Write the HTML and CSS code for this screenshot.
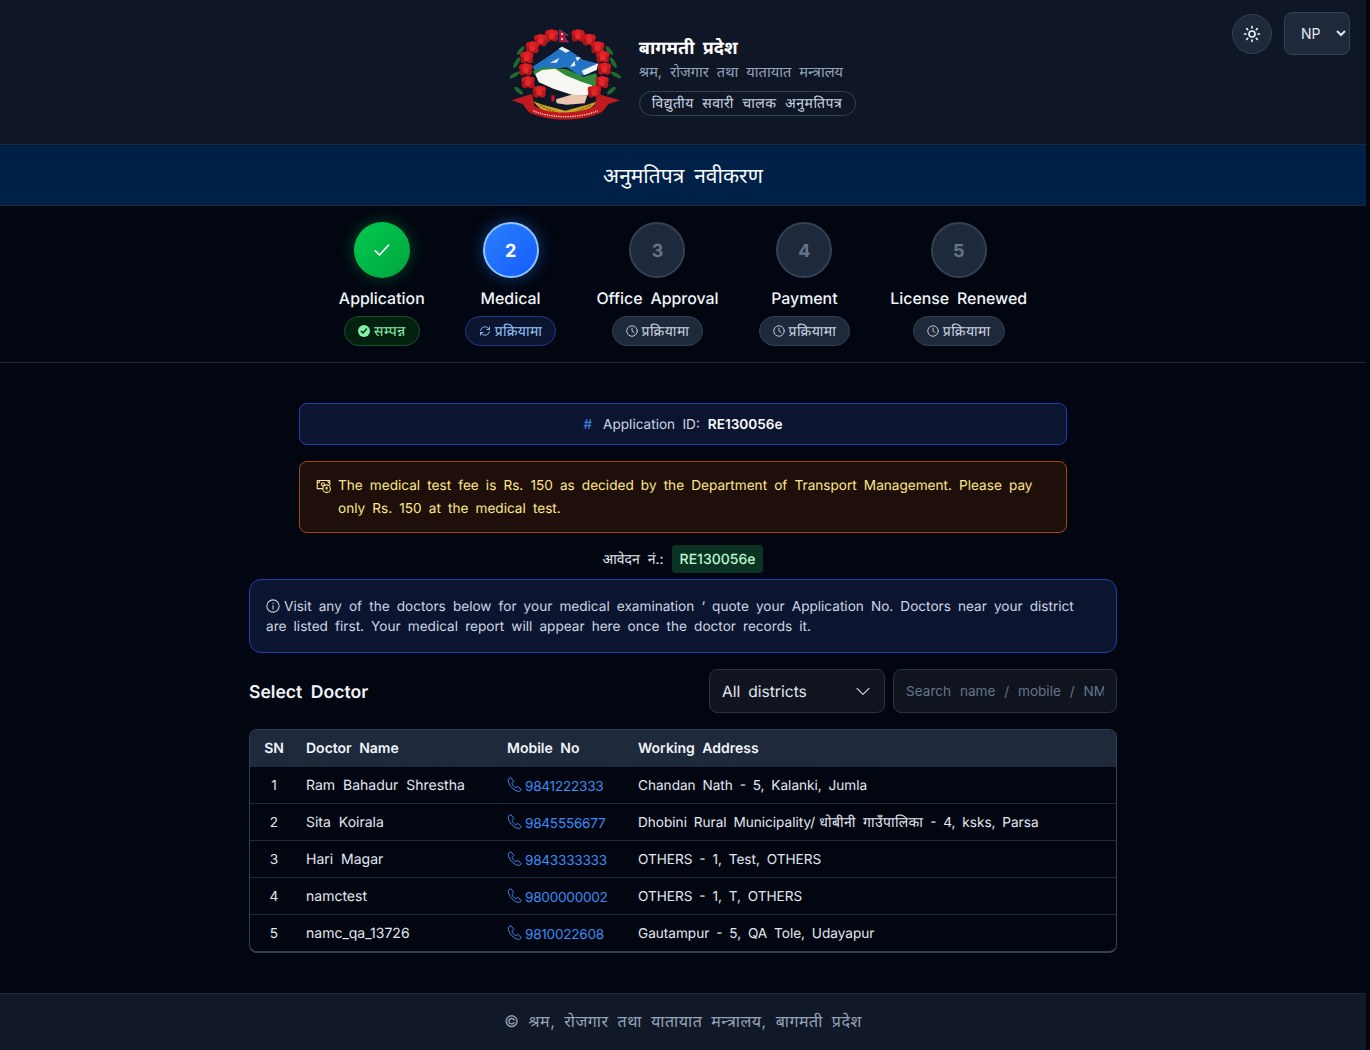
FILE: index.html
```html
<!DOCTYPE html>
<html>

<head>
  <meta charset="utf-8">
  <meta name="viewport" content="width=device-width, initial-scale=1">
  <title>अनुमतिपत्र नवीकरण</title>
  <link rel="stylesheet" href="styles.css">
</head>

<body>
  <header class="topbar">
    <div class="brand">
      <svg class="logo" viewBox="30 24 336 288" aria-label="Emblem">
        <defs>
          <g id="flower">
            <circle cx="-10" cy="-6" r="10" fill="#c4171c" />
            <circle cx="10" cy="-6" r="10" fill="#d01b20" />
            <circle cx="-9" cy="8" r="10" fill="#a91418" />
            <circle cx="9" cy="8" r="10" fill="#b9161b" />
            <circle cx="0" cy="-8" r="10" fill="#dc2226" />
            <circle cx="0" cy="3" r="9" fill="#e22a2c" />
          </g>
        </defs>
        <!-- leaves -->
        <g fill="#1f6b2c">
          <ellipse cx="140" cy="62" rx="16" ry="6" transform="rotate(-30 140 62)" />
          <ellipse cx="252" cy="62" rx="16" ry="6" transform="rotate(30 252 62)" />
          <ellipse cx="62" cy="92" rx="16" ry="6" transform="rotate(-50 62 92)" />
          <ellipse cx="328" cy="92" rx="16" ry="6" transform="rotate(50 328 92)" />
          <ellipse cx="50" cy="128" rx="18" ry="6" transform="rotate(-60 50 128)" />
          <ellipse cx="340" cy="128" rx="18" ry="6" transform="rotate(60 340 128)" />
          <ellipse cx="44" cy="165" rx="18" ry="6" transform="rotate(-30 44 165)" />
          <ellipse cx="348" cy="165" rx="18" ry="6" transform="rotate(30 348 165)" />
          <ellipse cx="56" cy="212" rx="16" ry="6" transform="rotate(40 56 212)" />
          <ellipse cx="334" cy="212" rx="16" ry="6" transform="rotate(-40 334 212)" />
          <ellipse cx="90" cy="240" rx="16" ry="6" transform="rotate(60 90 240)" />
          <ellipse cx="302" cy="240" rx="16" ry="6" transform="rotate(-60 302 240)" />
        </g>
        <!-- flag -->
        <path d="M178 28 L206 46 L192 48 L206 66 L178 66 Z" fill="#c8102e" stroke="#2b4a9b" stroke-width="2" />
        <circle cx="186" cy="42" r="3" fill="#fff" />
        <circle cx="186" cy="57" r="3" fill="#fff" />
        <!-- mountain -->
        <path d="M98 140 L150 106 L186 80 L216 96 L250 120 L292 130 L268 162 L240 168 L200 142 L130 150 L104 152 Z" fill="#2273c4" />
        <path d="M176 86 L186 80 L210 92 L198 98 Z M150 128 L178 114 L170 128 Z M226 112 L242 112 L232 124 Z M210 140 L224 122 L226 138 Z" fill="#e8f2fb" />
        <path d="M245 152 L295 130 L290 150 L252 166 Z" fill="#f2f6fa" />
        <!-- hills -->
        <path d="M98 154 L132 140 L200 148 L250 170 L288 160 L298 198 L270 210 L120 190 Z" fill="#2f8a3b" />
        <path d="M106 162 L126 150 L166 146 L196 166 L246 186 L276 196 L270 226 L220 226 L160 206 L116 186 Z" fill="#f7f7f2" />
        <!-- hands -->
        <path d="M168 238 L214 224 L262 226 L254 250 L200 254 L170 250 Z" fill="#e8c6b0" />
        <rect x="154" y="226" width="10" height="18" fill="#c8102e" />
        <!-- wheat -->
        <path d="M100 244 C130 284 170 290 192 286 C226 290 262 282 292 244 L262 254 L196 272 L128 254 Z" fill="#c9a227" />
        <path d="M120 256 L176 282 M272 256 L216 282" stroke="#8a6a14" stroke-width="5" stroke-dasharray="6 4" />
        <!-- ribbon -->
        <path d="M35 241 L96 222 L104 258 C140 284 240 284 284 258 L292 222 L361 241 L326 252 L306 276 C250 306 140 306 86 276 L68 252 Z" fill="#c01a1f" />
        <path d="M100 272 C150 296 240 296 294 272" fill="none" stroke="#f2d5c8" stroke-width="4" stroke-dasharray="4 3" />
        <!-- flowers -->
        <use href="#flower" x="155" y="46" />
        <use href="#flower" x="122" y="60" />
        <use href="#flower" x="97" y="82" />
        <use href="#flower" x="80" y="112" />
        <use href="#flower" x="77" y="148" />
        <use href="#flower" x="84" y="186" />
        <use href="#flower" x="118" y="215" />
        <use href="#flower" x="234" y="46" />
        <use href="#flower" x="267" y="59" />
        <use href="#flower" x="293" y="82" />
        <use href="#flower" x="308" y="110" />
        <use href="#flower" x="313" y="146" />
        <use href="#flower" x="306" y="186" />
        <use href="#flower" x="283" y="215" />
      </svg>
      <div class="brand-text">
        <h1>बागमती प्रदेश</h1>
        <p>श्रम, रोजगार तथा यातायात मन्त्रालय</p>
        <span class="brand-tag">विद्युतीय सवारी चालक अनुमतिपत्र</span>
      </div>
    </div>
    <div class="top-actions">
      <button class="theme-btn" aria-label="Theme">
        <svg width="18" height="18" viewBox="0 0 24 24" fill="none" stroke="#f1f5f9" stroke-width="2.2" stroke-linecap="round">
          <circle cx="12" cy="12" r="4" />
          <path d="M12 2v2M12 20v2M4.9 4.9l1.4 1.4M17.7 17.7l1.4 1.4M2 12h2M20 12h2M6.3 17.7l-1.4 1.4M19.1 4.9l-1.4 1.4" />
        </svg>
      </button>
      <select class="lang-select">
        <option>NP</option>
        <option>EN</option>
      </select>
    </div>
  </header>

  <div class="banner">अनुमतिपत्र नवीकरण</div>

  <section class="stepper">
    <div class="step">
      <div class="step-circle done">
        <svg width="20" height="20" viewBox="0 0 24 24" fill="none" stroke="#fff" stroke-width="2" stroke-linecap="round" stroke-linejoin="round"><path d="M4 13l5 5L20 6" /></svg>
      </div>
      <div class="step-label">Application</div>
      <span class="pill pill-green">
        <svg width="12" height="12" viewBox="0 0 24 24"><circle cx="12" cy="12" r="12" fill="#86efac" /><path d="M6.5 12.5l3.5 3.5 7-8" fill="none" stroke="#052e16" stroke-width="3" stroke-linecap="round" stroke-linejoin="round" /></svg>
        सम्पन्न
      </span>
    </div>
    <div class="step">
      <div class="step-circle active">2</div>
      <div class="step-label">Medical</div>
      <span class="pill pill-blue">
        <svg width="12" height="12" viewBox="0 0 24 24" fill="none" stroke="#93c5fd" stroke-width="1.8" stroke-linecap="round" stroke-linejoin="round"><path d="M3 11a9 9 0 0 1 16-4l2 2M21 13a9 9 0 0 1-16 4l-2-2" /><path d="M21 4v5h-5M3 20v-5h5" /></svg>
        प्रक्रियामा
      </span>
    </div>
    <div class="step">
      <div class="step-circle">3</div>
      <div class="step-label">Office Approval</div>
      <span class="pill pill-gray">
        <svg width="12" height="12" viewBox="0 0 24 24" fill="none" stroke="#cbd5e1" stroke-width="1.8" stroke-linecap="round"><circle cx="12" cy="12" r="10.5" /><path d="M12 6v6l4 3" /></svg>
        प्रक्रियामा
      </span>
    </div>
    <div class="step">
      <div class="step-circle">4</div>
      <div class="step-label">Payment</div>
      <span class="pill pill-gray">
        <svg width="12" height="12" viewBox="0 0 24 24" fill="none" stroke="#cbd5e1" stroke-width="1.8" stroke-linecap="round"><circle cx="12" cy="12" r="10.5" /><path d="M12 6v6l4 3" /></svg>
        प्रक्रियामा
      </span>
    </div>
    <div class="step">
      <div class="step-circle">5</div>
      <div class="step-label">License Renewed</div>
      <span class="pill pill-gray">
        <svg width="12" height="12" viewBox="0 0 24 24" fill="none" stroke="#cbd5e1" stroke-width="1.8" stroke-linecap="round"><circle cx="12" cy="12" r="10.5" /><path d="M12 6v6l4 3" /></svg>
        प्रक्रियामा
      </span>
    </div>
  </section>

  <main class="content">
    <div class="narrow">
      <div class="app-id">
        <span class="hash">#</span>
        <span class="app-id-label">Application ID:</span>
        <strong>RE130056e</strong>
      </div>

      <div class="fee-alert">
        <svg class="fee-icon" width="15" height="15" viewBox="0 0 24 24" fill="none" stroke="#fde68a" stroke-width="1.8" stroke-linejoin="round"><path d="M11 17H2V4h20v7" /><path d="M2 8c3 0 4-1 4-4M22 8c-2 0-3-1-3-4" /><circle cx="11" cy="10" r="2.5" /><circle cx="17" cy="17" r="6" /><path d="M15 15h4M15 17h4M16 15c2 0 2 3 0 3l2 2" stroke-width="1.2" /></svg>
        <p>The medical test fee is Rs. 150 as decided by the Department of Transport Management. Please pay only Rs. 150 at the medical test.</p>
      </div>
    </div>

    <div class="app-number">
      <span>आवेदन नं.:</span>
      <span class="app-number-code">RE130056e</span>
    </div>

    <div class="info-box">
      <svg class="info-icon" width="14" height="14" viewBox="0 0 24 24" fill="none" stroke="#cbd5e1" stroke-width="1.8" stroke-linecap="round"><circle cx="12" cy="12" r="10.5" /><path d="M12 11v6M12 7v.5" /></svg><span>Visit any of the doctors below for your medical examination ‘ quote your Application No. Doctors near your district are listed first. Your medical report will appear here once the doctor records it.</span>
    </div>

    <div class="doctor-bar">
      <h2>Select Doctor</h2>
      <div class="doctor-filters">
        <div class="district-select">
          <span>All districts</span>
          <svg width="16" height="16" viewBox="0 0 24 24" fill="none" stroke="#cbd5e1" stroke-width="1.8" stroke-linecap="round" stroke-linejoin="round"><path d="M3 8l9 9 9-9" /></svg>
        </div>
        <input class="search-input" type="text" placeholder="Search name / mobile / NM">
      </div>
    </div>

    <div class="table-wrap">
      <table class="doctor-table">
        <thead>
          <tr>
            <th class="col-sn">SN</th>
            <th class="col-name">Doctor Name</th>
            <th class="col-mobile">Mobile No</th>
            <th>Working Address</th>
          </tr>
        </thead>
        <tbody>
          <tr>
            <td class="col-sn">1</td>
            <td class="doc-name">Ram Bahadur Shrestha</td>
            <td><a class="phone"><svg width="15" height="15" viewBox="0 0 24 24" fill="none" stroke="#3d8bf0" stroke-width="1.6" stroke-linejoin="round"><path d="M2 4l4-3 5 6-3 3c1 3 3 6 6 7l3-2 6 5-3 3C12 24 1 12 2 4z" /></svg>9841222333</a></td>
            <td>Chandan Nath - 5, Kalanki, Jumla</td>
          </tr>
          <tr>
            <td class="col-sn">2</td>
            <td class="doc-name">Sita Koirala</td>
            <td><a class="phone"><svg width="15" height="15" viewBox="0 0 24 24" fill="none" stroke="#3d8bf0" stroke-width="1.6" stroke-linejoin="round"><path d="M2 4l4-3 5 6-3 3c1 3 3 6 6 7l3-2 6 5-3 3C12 24 1 12 2 4z" /></svg>9845556677</a></td>
            <td>Dhobini Rural Municipality/<span class="np-name">धोबीनी गाउँपालिका</span> - 4, ksks, Parsa</td>
          </tr>
          <tr>
            <td class="col-sn">3</td>
            <td class="doc-name">Hari Magar</td>
            <td><a class="phone"><svg width="15" height="15" viewBox="0 0 24 24" fill="none" stroke="#3d8bf0" stroke-width="1.6" stroke-linejoin="round"><path d="M2 4l4-3 5 6-3 3c1 3 3 6 6 7l3-2 6 5-3 3C12 24 1 12 2 4z" /></svg>9843333333</a></td>
            <td>OTHERS - 1, Test, OTHERS</td>
          </tr>
          <tr>
            <td class="col-sn">4</td>
            <td class="doc-name">namctest</td>
            <td><a class="phone"><svg width="15" height="15" viewBox="0 0 24 24" fill="none" stroke="#3d8bf0" stroke-width="1.6" stroke-linejoin="round"><path d="M2 4l4-3 5 6-3 3c1 3 3 6 6 7l3-2 6 5-3 3C12 24 1 12 2 4z" /></svg>9800000002</a></td>
            <td>OTHERS - 1, T, OTHERS</td>
          </tr>
          <tr>
            <td class="col-sn">5</td>
            <td class="doc-name">namc_qa_13726</td>
            <td><a class="phone"><svg width="15" height="15" viewBox="0 0 24 24" fill="none" stroke="#3d8bf0" stroke-width="1.6" stroke-linejoin="round"><path d="M2 4l4-3 5 6-3 3c1 3 3 6 6 7l3-2 6 5-3 3C12 24 1 12 2 4z" /></svg>9810022608</a></td>
            <td>Gautampur - 5, QA Tole, Udayapur</td>
          </tr>
        </tbody>
      </table>
    </div>
  </main>

  <footer class="footer">
    <span>© श्रम, रोजगार तथा यातायात मन्त्रालय, बागमती प्रदेश</span>
  </footer>
</body>

</html>
```

FILE: styles.css
```css
* {
  box-sizing: border-box;
}

html {
  background-color: #05070d;
  color-scheme: dark;
}

body {
  margin: 0 4px 0 0;
  background-color: #020611;
  color: #e2e8f0;
  font-family: Inter, "Noto Sans", sans-serif;
  font-size: 13.6px;
  word-spacing: 3.5px;
  text-rendering: geometricPrecision;
}

.topbar {
  height: 145px;
  background-color: #0f1626;
  border-bottom: 1px solid #1e293b;
  display: flex;
  justify-content: center;
  align-items: center;
  position: relative;
}

.brand {
  display: flex;
  align-items: center;
  gap: 17px;
}

.logo {
  width: 112px;
  height: 96px;
  margin-top: 8px;
  filter: blur(0.5px);
}

.brand-text {
  padding-top: 7px;
}

.brand-text h1 {
  margin: 0;
  font-size: 18px;
  font-weight: 700;
  line-height: 27px;
  color: #fff;
  word-spacing: 4px;
}

.brand-text p {
  margin: 0 0 9px;
  font-size: 14.6px;
  line-height: 20px;
  color: #94a3b8;
  word-spacing: 4px;
}

.brand-tag {
  display: block;
  width: fit-content;
  height: 25px;
  line-height: 23px;
  padding: 0 13px 0 12px;
  border: 1px solid #334155;
  border-radius: 13px;
  font-size: 14px;
  letter-spacing: 0.5px;
  word-spacing: 4px;
  color: #cbd5e1;
}

.top-actions {
  position: absolute;
  top: 12px;
  right: 16px;
  display: flex;
  align-items: center;
  gap: 12px;
}

.theme-btn {
  width: 40px;
  height: 40px;
  padding: 0;
  border-radius: 50%;
  border: 1px solid #334155;
  background-color: #1e293b;
  display: flex;
  align-items: center;
  justify-content: center;
}

.lang-select {
  width: 66px;
  height: 43px;
  padding-left: 12px;
  border: 1px solid #334155;
  border-radius: 8px;
  background-color: #1e293b;
  color: #e2e8f0;
  font-family: Inter, sans-serif;
  font-size: 14px;
}

.banner {
  height: 61px;
  padding-top: 1px;
  background-color: #002147;
  border-bottom: 1px solid #1e293b;
  color: #f8fafc;
  font-size: 21px;
  word-spacing: 4px;
  display: flex;
  align-items: center;
  justify-content: center;
}

.stepper {
  height: 157px;
  padding-top: 16px;
  border-bottom: 1px solid #1e293b;
  display: flex;
  justify-content: center;
  gap: 40px;
}

.step {
  display: flex;
  flex-direction: column;
  align-items: center;
}

.step-circle {
  width: 56px;
  height: 56px;
  padding-top: 2px;
  border-radius: 50%;
  background-color: #1e293b;
  border: 2px solid #334155;
  color: #64748b;
  font-size: 18px;
  font-weight: 700;
  display: flex;
  align-items: center;
  justify-content: center;
}

.step-circle.done {
  padding-top: 0;
  background: linear-gradient(135deg, #00c950, #00a63e);
  border: 0;
  box-shadow: 0 0 16px rgba(0, 201, 80, 0.35);
}

.step-circle.active {
  background: linear-gradient(135deg, #2b7fff, #155dfc);
  border-color: #8ec5ff;
  color: #fff;
  box-shadow: 0 0 16px rgba(43, 127, 255, 0.45);
}

.step-label {
  margin-top: 10px;
  font-size: 15.9px;
  line-height: 22px;
  font-weight: 500;
  word-spacing: 3.6px;
  color: #f1f5f9;
  white-space: nowrap;
}

.pill {
  margin-top: 6px;
  height: 30px;
  padding: 0 13px;
  border-radius: 15px;
  border: 1px solid;
  font-size: 14px;
  letter-spacing: 0.4px;
  display: inline-flex;
  align-items: center;
  gap: 4px;
  white-space: nowrap;
}

.pill-green {
  background-color: #04210f;
  border-color: #14532d;
  color: #86efac;
}

.pill-blue {
  background-color: #0c1530;
  border-color: #1e3a8a;
  color: #93c5fd;
}

.pill-gray {
  background-color: #1e293b;
  border-color: #334155;
  color: #cbd5e1;
}

.content {
  width: 868px;
  margin: 0 auto;
  padding: 40px 0;
}

.narrow {
  width: 768px;
  margin: 0 auto;
}

.app-id {
  height: 42px;
  padding-top: 1px;
  background-color: #0c1530;
  border: 1px solid #1e40af;
  border-radius: 8px;
  display: flex;
  align-items: center;
  justify-content: center;
  gap: 8px;
  color: #cbd5e1;
}

.app-id strong {
  color: #f8fafc;
  font-weight: 600;
}

.hash {
  color: #3d8bf0;
  margin-right: 3px;
}

.fee-alert {
  margin-top: 16px;
  height: 72px;
  padding: 13px 16px 0;
  background-color: #1f0f0b;
  border: 1px solid #a3470f;
  border-radius: 8px;
  display: flex;
  gap: 7px;
}

.fee-icon {
  flex: none;
  margin-top: 3px;
}

.fee-alert p {
  margin: 0;
  line-height: 23px;
  word-spacing: 3.3px;
  color: #fde68a;
}

.app-number {
  height: 28px;
  margin-top: 12px;
  display: flex;
  align-items: center;
  justify-content: center;
  gap: 8px;
  font-size: 14px;
  word-spacing: 4px;
  color: #e2e8f0;
}

.app-number-code {
  height: 28px;
  line-height: 29px;
  padding: 0 8px;
  border-radius: 4px;
  background-color: #0b3323;
  color: #bbf7d0;
  font-weight: 500;
}

.info-box {
  margin-top: 6px;
  height: 74px;
  padding: 17px 16px 0;
  background-color: #0c1530;
  border: 1px solid #1e40af;
  border-radius: 12px;
  line-height: 20px;
  word-spacing: 3.3px;
  color: #cbd5e1;
}

.info-icon {
  vertical-align: -2px;
  margin-right: 4px;
}

.doctor-bar {
  margin-top: 16px;
  display: flex;
  align-items: center;
  justify-content: space-between;
}

.doctor-bar h2 {
  margin: 2px 0 0;
  font-size: 17.6px;
  font-weight: 600;
  word-spacing: 4px;
  color: #f1f5f9;
}

.doctor-filters {
  display: flex;
  gap: 8px;
}

.district-select {
  width: 176px;
  height: 44px;
  padding: 0 13px 0 12px;
  background-color: #0f141f;
  border: 1px solid #2a3342;
  border-radius: 8px;
  font-size: 15.6px;
  word-spacing: 3.5px;
  color: #e2e8f0;
  display: flex;
  align-items: center;
  justify-content: space-between;
}

.search-input {
  width: 224px;
  height: 44px;
  padding: 0 12px;
  background-color: #0f141f;
  border: 1px solid #2a3342;
  border-radius: 8px;
  font-family: Inter, sans-serif;
  font-size: 13.6px;
  word-spacing: 5px;
  color: #e2e8f0;
}

.search-input::placeholder {
  color: #64748b;
}

.table-wrap {
  margin-top: 16px;
  height: 224px;
  border: 1px solid #334155;
  border-bottom-width: 2px;
  border-radius: 8px;
  overflow: hidden;
}

.doctor-table {
  width: 100%;
  border-collapse: collapse;
  table-layout: fixed;
}

.doctor-table th {
  height: 36px;
  padding: 1px 14px 0;
  background-color: #1e293b;
  color: #f1f5f9;
  font-size: 14px;
  word-spacing: 4px;
  font-weight: 600;
  text-align: left;
}

.doctor-table td {
  height: 37px;
  padding: 2px 14px 0;
  border-top: 1px solid #1e293b;
  line-height: 16px;
  word-spacing: 3px;
  color: #e2e8f0;
}

.doctor-table .col-sn {
  width: 42px;
  text-align: center;
  padding-left: 6px;
  padding-right: 0;
}

.doctor-table .doc-name {
  font-size: 14px;
  word-spacing: 4px;
}

.col-name {
  width: 201px;
}

.col-mobile {
  width: 131px;
}

.phone {
  color: #3d8bf0;
  letter-spacing: -0.25px;
}

.phone svg {
  margin-right: 3px;
  vertical-align: -1px;
}

.np-name {
  margin-left: 4px;
  font-size: 14px;
  letter-spacing: 0.4px;
}

.footer {
  height: 57px;
  padding-bottom: 2px;
  background-color: #111827;
  border-top: 1px solid #1e293b;
  color: #94a3b8;
  font-size: 16px;
  letter-spacing: 0.5px;
  word-spacing: 4px;
  display: flex;
  align-items: center;
  justify-content: center;
}
```
